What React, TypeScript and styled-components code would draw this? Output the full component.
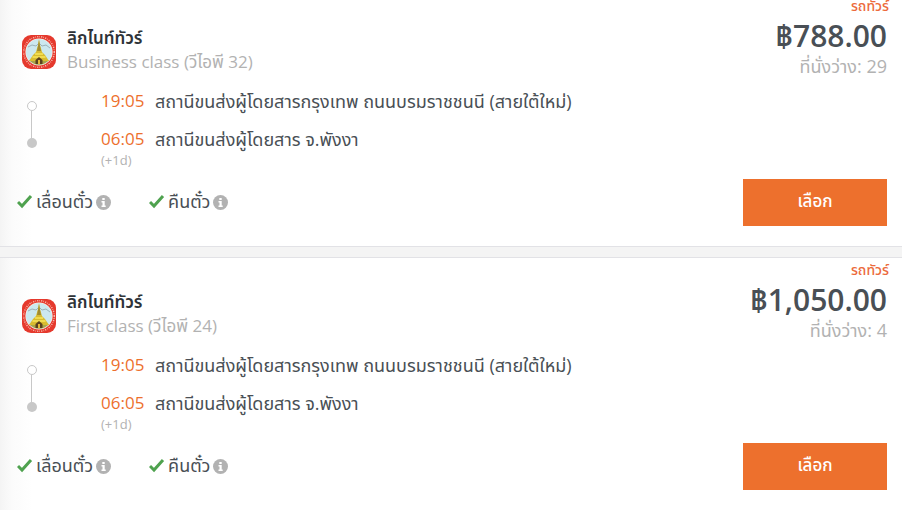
import React from "react";
import styled, { createGlobalStyle } from "styled-components";

const GlobalStyle = createGlobalStyle`
  * { box-sizing: border-box; }
  body {
    margin: 0;
    background: #f4f4f4;
    color: #494f55;
    font-family: "Open Sans", "Noto Sans", "Noto Sans Thai", sans-serif;
    font-size: 17px;
    line-height: 24px;
    overflow: hidden;
  }
`;

const Results = styled.main`
  display: flex;
  flex-direction: column;
  gap: 10px;
  margin-top: -7px;
`;

const Card = styled.article`
  display: flex;
  flex-direction: column;
  padding: 5px 15px 20px 17px;
  background: linear-gradient(to right, #f4f4f4, #fbfbfb 12px, #fff 32px);
  border: solid #e2e2e6;
  border-width: 1px 0;
`;

const Header = styled.header`
  display: flex;
  justify-content: space-between;
  height: 78px;
`;

const Operator = styled.div`
  display: flex;
  align-items: center;
  gap: 10px;
  padding: 24px 0 0 4px;
`;

const LogoImage = styled.svg`
  flex: none;
  margin-top: 4px;
`;

const Name = styled.h2`
  margin: 0;
  color: #2e3338;
  font-size: 17px;
  font-weight: 600;
  line-height: 24px;
`;

const Muted = styled.div<{ $large?: boolean }>`
  color: #b2b2b2;
  font-size: ${(p) => (p.$large ? 18 : 17)}px;
  line-height: 24px;
`;

const PriceBlock = styled.div`
  text-align: right;
  white-space: nowrap;
`;

const VehicleTag = styled.div`
  margin-right: -2px;
  color: #ec6a3c;
  font-size: 14px;
  font-weight: 500;
  line-height: 14px;
`;

const Price = styled.div`
  margin-top: 5px;
  font-size: 30px;
  font-weight: 600;
  line-height: 36px;
`;

const Route = styled.div`
  display: grid;
  grid-template-columns: 30px 1fr;
  column-gap: 54px;
  margin-top: 12px;
  height: 80px;
`;

const Track = styled.svg`
  display: block;
  margin: 10px 0 0 8px;
`;

const Stops = styled.ol`
  display: flex;
  flex-direction: column;
  gap: 14px;
  margin: 0;
  padding: 0;
  list-style: none;
`;

const Stop = styled.li`
  display: grid;
  grid-template-columns: 44px 1fr;
  column-gap: 10px;
`;

const Time = styled.time`
  color: #ed702d;
`;

const Station = styled.span`
  font-size: 18px;
`;

const DayOffset = styled.span`
  color: #b2b2b2;
  font-size: 13px;
  line-height: 18px;
`;

const Footer = styled.footer`
  display: flex;
  align-items: center;
  justify-content: space-between;
  margin-top: 10px;
`;

const Perks = styled.ul`
  display: flex;
  gap: 38px;
  margin: 0;
  padding: 0;
  font-size: 18px;
  list-style: none;
`;

const Perk = styled.li`
  display: flex;
  align-items: center;
  gap: 3px;
`;

const PerkName = styled.span`
  padding-bottom: 3px;
`;

const InfoButton = styled.button`
  display: flex;
  padding: 0;
  border: 0;
  background: none;
  cursor: pointer;
`;

const SelectButton = styled.button`
  width: 144px;
  height: 47px;
  padding: 0 0 4px;
  border: 0;
  background: #ed702d;
  color: #fff;
  font: inherit;
  font-weight: 500;
  cursor: pointer;
`;

const Logo = () => (
  <LogoImage width="36" height="36" viewBox="0 0 36 36" aria-hidden="true">
    <rect x="1" y="1" width="34" height="34" rx="9" fill="#e5392d" />
    <circle cx="18" cy="18" r="15.3" fill="none" stroke="#f6b5aa" strokeWidth="1.5" strokeDasharray="1.200 1.100 .6 1.200" />
    <circle cx="18" cy="18" r="13.6" fill="#fff3e8" />
    <circle cx="18" cy="18" r="13" fill="#cce8ef" />
    <path d="M7 13l4-2 4 1 3-3 3 3 4-1 4 3" fill="none" stroke="#879aa0" strokeWidth=".7" />
    <path d="M8 26h20a13 13 0 0 1-20 0z" fill="#a9a448" />
    <path d="M18 5l1 6 2 7 3 3 4 6H8l4-6 3-3 2-7z" fill="#d8bc30" />
    <path d="M18 6l.8 5 1.200 6h-4l1.200-6z" fill="#a08b30" />
    <path d="M14 20h8M11.500 23h13" stroke="#f0db4f" strokeWidth="1.8" />
    <path d="M14.500 30v-4l3.500-3 3.500 3v4z" fill="#5a411d" />
    <path d="M17 30v-4h2v4z" fill="#e5b837" />
  </LogoImage>
);

const Check = () => (
  <svg width="16" height="15" viewBox="0 0 16 15" aria-hidden="true">
    <path d="M1 7l4 4L14 1" fill="none" stroke="#4fa24f" strokeWidth="3" />
  </svg>
);

const Info = () => (
  <svg width="15" height="15" viewBox="0 0 15 15" aria-hidden="true">
    <circle cx="7.500" cy="7.500" r="7.500" fill="#b2b2b2" />
    <path d="M6.300 3h2.400v2H6.300zM5.500 6h3.200v4.500h1V12H5.500v-1.500h1v-3h-1z" fill="#fff" />
  </svg>
);

const trips = [
  { cls: "Business class (วีไอพี 32)", price: "฿788.00", seats: 29 },
  { cls: "First class (วีไอพี 24)", price: "฿1,050.00", seats: 4 },
];

const perks = ["เลื่อนตั๋ว", "คืนตั๋ว"];

export default function App() {
  return (
    <>
      <GlobalStyle />
      <Results>
        {trips.map((trip) => (
          <Card key={trip.cls}>
            <Header>
              <Operator>
                <Logo />
                <div>
                  <Name>ลิกไนท์ทัวร์</Name>
                  <Muted>{trip.cls}</Muted>
                </div>
              </Operator>
              <PriceBlock>
                <VehicleTag>รถทัวร์</VehicleTag>
                <Price>{trip.price}</Price>
                <Muted $large>ที่นั่งว่าง: {trip.seats}</Muted>
              </PriceBlock>
            </Header>
            <Route>
              <Track width="14" height="52" viewBox="0 0 14 52" aria-hidden="true">
                <path d="M6.500 12v30" stroke="#c8c8c8" />
                <circle cx="7" cy="7" r="4.500" fill="#fff" stroke="#c8c8c8" />
                <circle cx="7" cy="44" r="5" fill="#c8c8c8" />
              </Track>
              <Stops>
                <Stop>
                  <Time>19:05</Time>
                  <Station>สถานีขนส่งผู้โดยสารกรุงเทพ ถนนบรมราชชนนี (สายใต้ใหม่)</Station>
                </Stop>
                <Stop>
                  <Time>06:05</Time>
                  <Station>สถานีขนส่งผู้โดยสาร จ.พังงา</Station>
                  <DayOffset>(+1d)</DayOffset>
                </Stop>
              </Stops>
            </Route>
            <Footer>
              <Perks>
                {perks.map((perk) => (
                  <Perk key={perk}>
                    <Check />
                    <PerkName>{perk}</PerkName>
                    <InfoButton type="button" aria-label={perk}>
                      <Info />
                    </InfoButton>
                  </Perk>
                ))}
              </Perks>
              <SelectButton type="button">เลือก</SelectButton>
            </Footer>
          </Card>
        ))}
      </Results>
    </>
  );
}
